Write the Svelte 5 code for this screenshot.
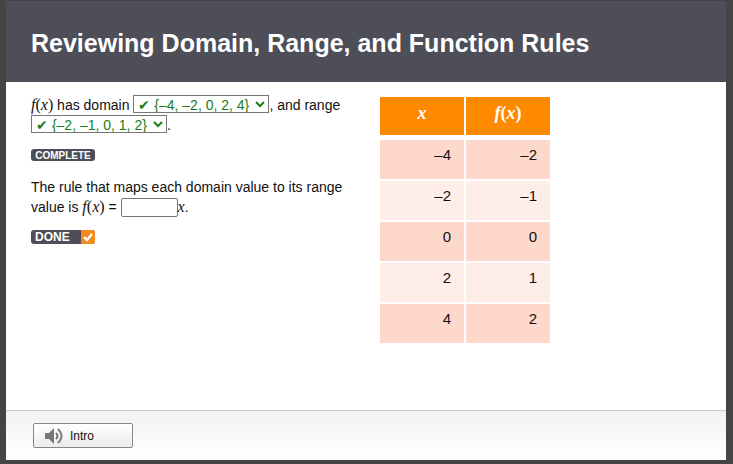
<script>
    let domain = '{–4, –2, 0, 2, 4}';
    let range = '{–2, –1, 0, 1, 2}';
    let answer = '';

    const rows = [
        ['–4', '–2'],
        ['–2', '–1'],
        ['0', '0'],
        ['2', '1'],
        ['4', '2']
    ];
</script>

<div class="lesson">
    <header>
        <h1>Reviewing Domain, Range, and Function Rules</h1>
    </header>

    <main>
        <section class="questions">
            <p>
                <span class="math"><i>f</i>(<i>x</i>)</span> has domain
                <select bind:value={domain} aria-label="Domain">
                    <option value={domain}>✔ {domain}</option>
                </select>, and range
                <select bind:value={range} aria-label="Range">
                    <option value={range}>✔ {range}</option>
                </select>.
            </p>
            <div class="tag">COMPLETE</div>
            <p>
                The rule that maps each domain value to its range value is
                <span class="math"><i>f</i>(<i>x</i>)</span> =
                <input type="text" bind:value={answer} aria-label="Coefficient of x" /><i class="math">x</i>.
            </p>
            <button class="tag done">
                <span>DONE</span>
                <svg viewBox="0 0 14 14" width="14" height="14" aria-hidden="true">
                    <rect width="14" height="14" fill="#f58a1f" />
                    <path d="M3 7l3 3 5-6" fill="none" stroke="#fff" stroke-width="2.4" />
                </svg>
            </button>
        </section>

        <table>
            <thead>
                <tr>
                    <th><i>x</i></th>
                    <th><i>f</i>(<i>x</i>)</th>
                </tr>
            </thead>
            <tbody>
                {#each rows as [x, y]}
                    <tr>
                        <td>{x}</td>
                        <td>{y}</td>
                    </tr>
                {/each}
            </tbody>
        </table>
    </main>

    <footer>
        <button class="intro">
            <svg viewBox="0 0 20 18" width="20" height="18" aria-hidden="true">
                <path d="M0 6h4l5-5v16l-5-5H0z" fill="#777" />
                <path d="M11 6q3 3 0 6" fill="none" stroke="#777" stroke-width="2" />
                <path d="M13 2q7 7 0 14" fill="none" stroke="#888" stroke-width="2.2" />
            </svg>
            Intro
        </button>
    </footer>
</div>

<style>
    :global(body) {
        margin: 0;
        background: #444;
    }

    .lesson {
        box-sizing: border-box;
        min-height: 100vh;
        padding: 1px 7px 4px 6px;
        display: flex;
        flex-direction: column;
        font-family: "Liberation Sans", Arial, sans-serif;
        font-size: 14px;
        color: #111;
    }

    header {
        padding: 28px 25px 25px;
        background: #4d4e58;
    }

    h1 {
        margin: 0;
        font-size: 25px;
        line-height: 28px;
        color: #fff;
    }

    main {
        flex: 1;
        display: flex;
        align-items: flex-start;
        gap: 20px;
        padding: 13px 25px;
        background: #fff;
    }

    .questions {
        width: 327px;
    }

    p {
        margin: 0;
        line-height: 20px;
    }

    .math {
        font-family: "Liberation Serif", "Times New Roman", serif;
        font-size: 16px;
        line-height: 16px;
    }

    select {
        width: 136px;
        height: 18px;
        padding: 0;
        border: 1px solid #767676;
        border-radius: 0;
        background-color: #fff;
        font: inherit;
        color: #1a7d1a;
    }

    input {
        box-sizing: border-box;
        width: 57px;
        height: 19px;
        padding: 1px 4px;
        border: 1px solid #767676;
        border-radius: 2px;
        font: inherit;
    }

    .tag {
        display: flex;
        align-items: center;
        justify-content: center;
        box-sizing: border-box;
        width: 64px;
        height: 12px;
        margin: 14px 0 16px;
        padding: 0;
        border: 0;
        border-radius: 3px;
        background: #4d4e58;
        font-family: inherit;
        font-size: 10px;
        font-weight: bold;
        color: #fff;
    }

    .done {
        justify-content: space-between;
        height: 14px;
        margin: 13px 0 0;
        padding-left: 4px;
        font-size: 12px;
        overflow: hidden;
    }

    table {
        width: 174px;
        border-spacing: 2px;
        table-layout: fixed;
        font-size: 15px;
    }

    th,
    td {
        box-sizing: border-box;
        height: 39px;
        padding: 6px 13px;
        line-height: 17px;
        vertical-align: top;
    }

    th {
        height: 41px;
        padding-top: 8px;
        border-bottom: 3px solid #fff;
        background: #ff8a00;
        font-family: "Liberation Serif", "Times New Roman", serif;
        font-size: 18px;
        color: #fff;
    }

    td {
        text-align: right;
        background: #ffd8cc;
    }

    tr:nth-child(even) td {
        background: #ffede8;
    }

    footer {
        padding: 12px 27px;
        border-top: 1px solid #ccc;
        background: linear-gradient(#f2f2f2, #fff);
    }

    .intro {
        display: flex;
        align-items: center;
        gap: 5px;
        width: 100px;
        height: 25px;
        padding: 0 11px;
        border: 1px solid #888;
        border-radius: 2px;
        background: linear-gradient(#fff, #ececec);
        font-family: inherit;
        font-size: 12px;
        color: #111;
    }
</style>
